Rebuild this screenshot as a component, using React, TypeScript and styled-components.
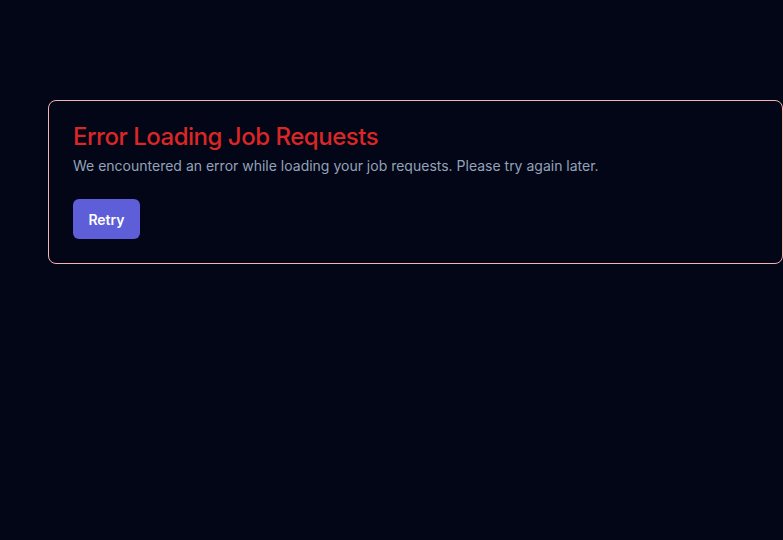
import React from "react";
import styled, { createGlobalStyle } from "styled-components";

const GlobalStyle = createGlobalStyle`
  html, body {
    margin: 0;
    padding: 0;
    background: #020617;
    font-family: Inter, "Noto Sans", sans-serif;
  }
  * { box-sizing: border-box; }
`;

const Page = styled.main`
  min-height: 540px;
  background: #020617;
  padding: 100px 0 0 48px;
`;

const ErrorCard = styled.section`
  border: 1px solid #f5b3b3;
  border-radius: 8px;
  background: #020617;
  padding: 20px 24px 24px;
  display: flex;
  flex-direction: column;
  align-items: flex-start;
`;

const Title = styled.h2`
  margin: 0;
  font-size: 24px;
  line-height: 32px;
  font-weight: 500;
  letter-spacing: -0.02em;
  color: #dc2626;
`;

const Message = styled.p`
  margin: 3px 0 0;
  font-size: 14px;
  line-height: 20px;
  color: #94a3b8;
`;

const RetryButton = styled.button`
  margin-top: 23px;
  height: 40px;
  width: 67px;
  padding: 0;
  border: none;
  border-radius: 6px;
  background: #5d5ed8;
  color: #ffffff;
  font-family: Inter, "Noto Sans", sans-serif;
  font-size: 14px;
  font-weight: 600;
  cursor: pointer;
`;

export default function App() {
  return (
    <>
      <GlobalStyle />
      <Page>
        <ErrorCard>
          <Title>Error Loading Job Requests</Title>
          <Message>
            We encountered an error while loading your job requests. Please try again later.
          </Message>
          <RetryButton>Retry</RetryButton>
        </ErrorCard>
      </Page>
    </>
  );
}
